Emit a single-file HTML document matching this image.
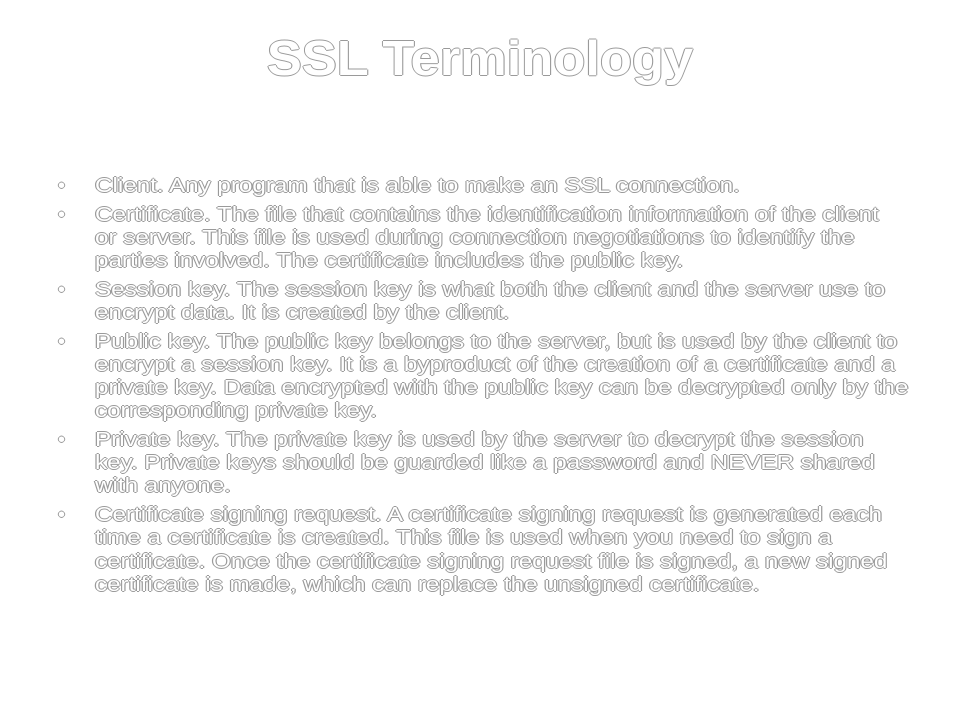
<!DOCTYPE html>
<html><head><meta charset="utf-8"><style>
html,body{margin:0;padding:0;background:#fff;width:960px;height:720px;overflow:hidden}
body{font-family:"Liberation Sans",Arial,sans-serif;color:#fff;position:relative}
.o{text-shadow:1px 0 0 #9a9a9a,-1px 0 0 #9a9a9a,0 1px 0 #9a9a9a,0 -1px 0 #9a9a9a}
h1{position:absolute;left:0;width:960px;top:31px;margin:0;text-align:center;font-size:49px;font-weight:bold;transform:scaleX(1.07);transform-origin:480px 0}
ul{position:absolute;left:58px;top:175px;margin:0;padding:0;list-style:none;font-size:20px;line-height:23.2px;width:840px}
li{position:relative;padding-left:37px;margin-bottom:5.5px}
li:before{content:"•";position:absolute;left:0;top:0}
li span{display:inline-block;transform:scaleX(1.21);transform-origin:0 0;white-space:nowrap}
</style></head><body>
<h1 class="o">SSL Terminology</h1>
<ul class="o">
<li><span>Client. Any program that is able to make an SSL connection.</span></li>
<li><span>Certificate. The file that contains the identification information of the client<br>or server. This file is used during connection negotiations to identify the<br>parties involved. The certificate includes the public key.</span></li>
<li><span>Session key. The session key is what both the client and the server use to<br>encrypt data. It is created by the client.</span></li>
<li><span>Public key. The public key belongs to the server, but is used by the client to<br>encrypt a session key. It is a byproduct of the creation of a certificate and a<br>private key. Data encrypted with the public key can be decrypted only by the<br>corresponding private key.</span></li>
<li><span>Private key. The private key is used by the server to decrypt the session<br>key. Private keys should be guarded like a password and NEVER shared<br>with anyone.</span></li>
<li><span>Certificate signing request. A certificate signing request is generated each<br>time a certificate is created. This file is used when you need to sign a<br>certificate. Once the certificate signing request file is signed, a new signed<br>certificate is made, which can replace the unsigned certificate.</span></li>
</ul>
</body></html>
